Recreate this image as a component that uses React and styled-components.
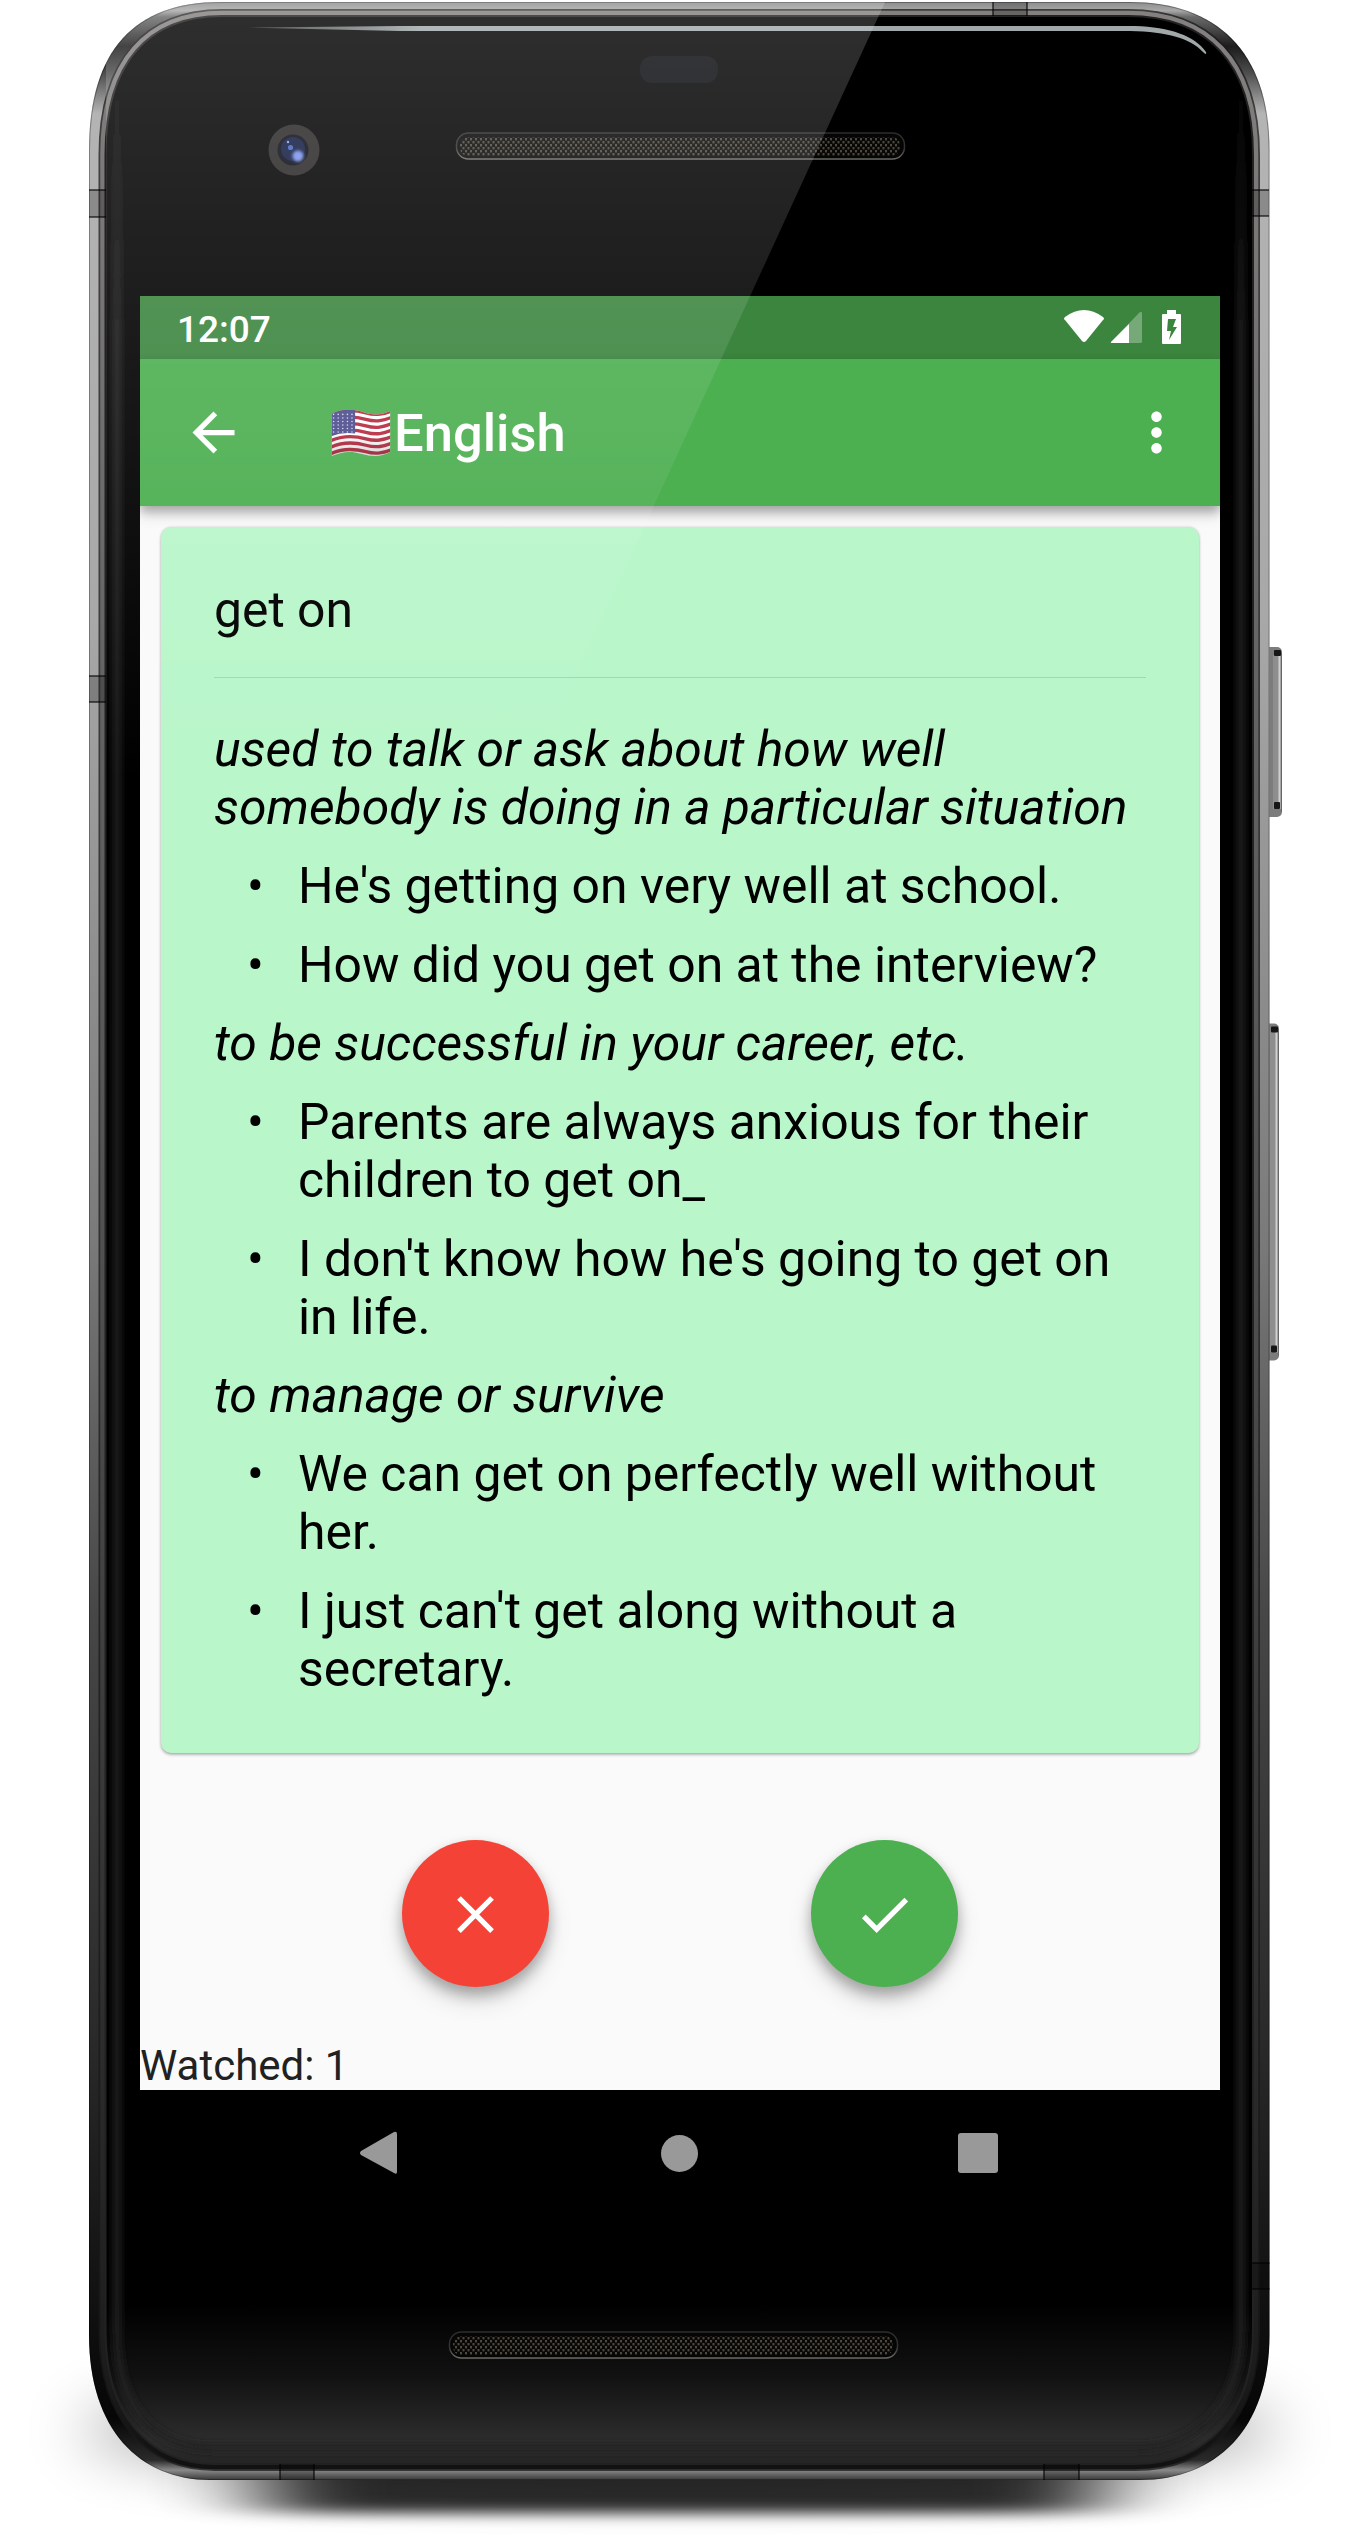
import React from "react";
import styled, { createGlobalStyle } from "styled-components";

const Global = createGlobalStyle`
  *,*::before{box-sizing:border-box}
  body{margin:0;background:#fff;font-family:Roboto,sans-serif}
`;
const Stage = styled.main`
  position:relative;width:1370px;height:2534px;overflow:hidden;background:#fff;
`;
const Art = styled.svg`position:absolute;left:0;top:0;display:block;pointer-events:none;`;
const Overlay = styled(Art)`z-index:2;`;
const Screen = styled.section`
  position:relative;margin:296px 0 0 140px;width:1080px;height:1794px;background:#fafafa;display:flex;flex-direction:column;overflow:hidden;
`;
const StatusBar = styled.div`
  height:63px;flex:none;background:#3b853e;color:#fff;display:flex;align-items:center;justify-content:space-between;
  padding:4px 37px 0 37px;font-size:37px;font-weight:500;
`;
const StatusIcons = styled.svg`display:block;margin-top:-5px;`;
const AppBar = styled.header`
  height:147px;flex:none;background:#4caf50;color:#fff;display:flex;align-items:center;padding:0 42px;position:relative;
  box-shadow:0 5px 10px rgba(0,0,0,.28),0 10px 13px rgba(0,0,0,.12);z-index:1;
`;
const BarIcon = styled.svg`flex:none;width:63px;height:63px;margin-right:${p => p.$pull || 0}px;`;
const Title = styled.h1`
  margin:0 0 0 85px;flex:1;display:flex;align-items:center;font-size:52.5px;font-weight:500;line-height:62px;
`;
const FlagIcon = styled.svg`flex:none;margin:2px 2px 0 0;`;
const Card = styled.article`
  margin:21px;flex:none;height:1226px;border-radius:10px;background:#b9f6ca;padding:55px 53px 0;color:#000;
  box-shadow:0 2px 3px rgba(0,0,0,.25),0 0 3px rgba(0,0,0,.16);font-size:49.875px;line-height:57.8px;
`;
const Word = styled.h2`margin:0;font:inherit;border-bottom:1px solid rgba(0,0,0,.12);height:96px;`;
const Sense = styled.p`margin:0 0 21px;font-style:italic;white-space:nowrap;`;
const Entry = styled.div`padding-top:43.2px;`;
const Example = styled.div`display:flex;margin-bottom:21px;white-space:nowrap;
  &::before{content:"•";width:84px;flex:none;padding-left:33px;}
`;
const Actions = styled.div`display:flex;justify-content:space-between;padding:66px 262px 0;`;
const Round = styled.button`
  width:147px;height:147px;border:0;border-radius:50%;background:${p => p.$color};padding:1px 0 0;display:grid;place-items:center;
  box-shadow:0 9px 14px rgba(0,0,0,.24),0 14px 26px rgba(0,0,0,.12),0 3px 12px rgba(0,0,0,.06);
`;
const Watched = styled.p`margin:auto 0 0;font-size:42px;line-height:49px;color:#212121;`;
const NavBar = styled.nav`
  position:relative;margin-left:140px;width:1080px;height:126px;display:flex;align-items:center;justify-content:space-between;padding:0 222px 0 220px;
`;
const HomeIcon = styled.svg`margin-left:2px;`;

const SENSES = [
  { text: ["used to talk or ask about how well", "somebody is doing in a particular situation"], examples: [["He's getting on very well at school."], ["How did you get on at the interview?"]] },
  { text: ["to be successful in your career, etc."], examples: [["Parents are always anxious for their", "children to get on_"], ["I don't know how he's going to get on", "in life."]] },
  { text: ["to manage or survive"], examples: [["We can get on perfectly well without", "her."], ["I just can't get along without a", "secretary."]] },
];
const Lines = ({ items }) => <span>{items.map((t, i) => <React.Fragment key={t}>{i > 0 && <br />}{t}</React.Fragment>)}</span>;

const BODY = "M220 2H1130C1215 2 1269.5 50 1269.5 150V2335C1269.5 2430 1215 2480 1140 2480H210C140 2480 89 2430 89 2335V150C89 50 135 2 220 2Z";
const GLASS = "M222 17H1128C1205 17 1252 62 1252 155V2332C1252 2415 1205 2463 1135 2463H215C150 2463 106.5 2415 106.5 2332V155C106.5 62 150 17 222 17Z";

// Antenna breaks in the metal frame: x, y, width, height
const BANDS = [
  [89, 190, 17, 27], [1252, 190, 17, 26], [89, 676, 17, 26], [993, 2, 34, 14],
  [1252, 2263, 17.5, 26], [280, 2464, 34, 16], [1044, 2464, 35, 16],
];

const Band = ({ x, y, w, h }) => {
  const lines = w > 25 ? `M${x} ${y}v${h}M${x + w} ${y}v${h}` : `M${x} ${y}h${w}M${x} ${y + h}h${w}`;
  return <g><rect x={x} y={y} width={w} height={h} fill="#000" opacity=".22" /><path d={lines} stroke="#000" strokeOpacity=".55" strokeWidth="2" /></g>;
};

const SideKey = ({ y, height, right }) => (
  <g>
    <rect x="1262" y={y} width={right - 1262} height={height} rx="5" fill="#7c7c7c" />
    <rect x={right - 9} y={y + 8} width="6" height={height - 16} fill="#8e8e8e" />
    <rect x={right - 3.5} y={y + 8} width="2" height={height - 16} fill="#d0d0d0" />
    <rect x={right - 8} y={y + 3} width="7" height="6" rx="1" fill="#161616" />
    <rect x={right - 8} y={y + height - 15} width="6" height="7" rx="1" fill="#161616" />
    <rect x={right - 1} y={y + 5} width="1" height={height - 10} fill="#666" />
  </g>
);

const Speaker = ({ x, y }) => (
  <g>
    <rect x={x + 0.5} y={y} width="448" height="26" rx="12" fill="#050505" stroke="url(#lip)" strokeWidth="1.5" />
    <rect x={x + 4} y={y + 4} width="440" height="19" rx="8" fill="url(#mesh)" />
  </g>
);

function Phone() {
  return (
    <Art width="1370" height="2534" viewBox="0 0 1370 2534">
      <defs>
        <linearGradient id="metal" x1="0" y1="0" x2="0" y2="1">
          <stop offset="0" stopColor="#8c8c8c" /><stop offset=".0035" stopColor="#a8a8a8" /><stop offset=".006" stopColor="#6a6a6a" />
          <stop offset=".018" stopColor="#1c1c1c" /><stop offset=".028" stopColor="#4a4a4a" /><stop offset=".045" stopColor="#b4b4b4" />
          <stop offset=".25" stopColor="#a8a8a8" /><stop offset=".5" stopColor="#7a7a7a" /><stop offset=".65" stopColor="#474747" />
          <stop offset=".82" stopColor="#2a2a2a" /><stop offset=".975" stopColor="#060606" /><stop offset=".992" stopColor="#2a2a2a" /><stop offset=".996" stopColor="#8a8a8a" /><stop offset="1" stopColor="#383838" />
        </linearGradient>
        <linearGradient id="rim" x1="0" y1="0" x2="0" y2="1">
          <stop offset="0" stopColor="#858080" /><stop offset=".25" stopColor="#666" /><stop offset=".55" stopColor="#4c4c4c" />
          <stop offset=".8" stopColor="#303030" /><stop offset=".96" stopColor="#1c1c1c" /><stop offset="1" stopColor="#121212" />
        </linearGradient>
        <linearGradient id="glass" x1="0" y1="0" x2="0" y2="1">
          <stop offset="0" stopColor="#000" /><stop offset=".935" stopColor="#000" /><stop offset=".965" stopColor="#121212" /><stop offset=".99" stopColor="#2c2c2c" /><stop offset="1" stopColor="#252525" />
        </linearGradient>
        <linearGradient id="glow" gradientUnits="userSpaceOnUse" x1="0" y1="60" x2="0" y2="330">
          <stop offset="0" stopColor="#202020" stopOpacity="0" /><stop offset="1" stopColor="#202020" />
        </linearGradient>
        <linearGradient id="lip" x1="0" y1="0" x2="0" y2="1">
          <stop offset="0" stopColor="#2c2c2c" /><stop offset=".6" stopColor="#333" /><stop offset="1" stopColor="#6a6a66" />
        </linearGradient>
        <linearGradient id="streak" gradientUnits="userSpaceOnUse" x1="248" y1="0" x2="420" y2="0">
          <stop offset="0" stopColor="#8d9495" stopOpacity=".4" /><stop offset="1" stopColor="#a0a8a9" />
        </linearGradient>
        <filter id="soft" x="-30%" y="-100%" width="160%" height="300%"><feGaussianBlur stdDeviation="52 7" /></filter>
        <filter id="wide" x="-30%" y="-80%" width="160%" height="260%"><feGaussianBlur stdDeviation="32 30" /></filter>
        <filter id="edge"><feGaussianBlur stdDeviation="3.5" /></filter>
        <filter id="spot" x="-100%" y="-100%" width="300%" height="300%"><feGaussianBlur stdDeviation="1.5" /></filter>
        <pattern id="mesh" width="5" height="6" patternUnits="userSpaceOnUse">
          <rect width="5" height="6" fill="#070706" /><rect width="2" height="2.4" fill="#4e483e" /><rect x="2.5" y="3" width="2" height="2.4" fill="#4e483e" />
        </pattern>
        <clipPath id="glassClip"><path d={GLASS} /></clipPath>
        <clipPath id="bodyClip"><path d={BODY} /></clipPath>
      </defs>
      <ellipse cx="680" cy="2430" rx="600" ry="50" fill="#000" opacity=".36" filter="url(#wide)" />
      <rect x="262" y="2430" width="836" height="83" rx="20" fill="#000" opacity=".82" filter="url(#soft)" />
      <SideKey y={647} height={170} right={1282} />
      <SideKey y={1023.5} height={337} right={1279} />
      <path d={BODY} fill="url(#metal)" />
      <g clipPath="url(#bodyClip)">
        <path d={BODY} fill="none" stroke="#000" strokeOpacity=".3" strokeWidth="2" />
        <path d={GLASS} fill="none" stroke="#1a1a1a" strokeOpacity=".75" strokeWidth="16" />
        <path d={GLASS} fill="none" stroke="url(#rim)" strokeWidth="12.5" />
        <path d={GLASS} fill="none" stroke="#222" strokeWidth="4" />
      </g>
      <path d={GLASS} fill="url(#glass)" />
      <g clipPath="url(#glassClip)">
        <path d="M117 60V2330C117 2405 150 2448 215 2448H1135C1200 2448 1241 2400 1241 2330V60" fill="none" stroke="url(#glow)" strokeWidth="7" filter="url(#edge)" />
      </g>
      <rect x="640" y="56" width="78" height="27" rx="12" fill="#090a0f" />
      <ellipse cx="294" cy="150" rx="25.5" ry="25.5" fill="#2a2727" />
      <circle cx="293" cy="150" r="15.5" fill="#0a0c18" />
      <circle cx="293" cy="149" r="12" fill="#121c42" />
      <circle cx="298" cy="156" r="5.5" fill="#7b93ee" filter="url(#spot)" />
      <circle cx="290.5" cy="147.5" r="2.6" fill="#4465bd" /><circle cx="288" cy="142" r="1.2" fill="#8ea5e5" />
      <path d="M248 27.5L400 26H1135C1170 27 1195 36 1206 52Q1207 56 1203 52C1190 38 1168 32 1130 31H400Z" fill="url(#streak)" />
      <Speaker x={456} y={133} /><Speaker x={449} y={2332} />
      {BANDS.map(([x, y, w, h]) => <Band key={`${x}-${y}`} x={x} y={y} w={w} h={h} />)}
    </Art>
  );
}

const Glare = () => (
  <Overlay width="1370" height="900" viewBox="0 0 1370 900">
    <defs>
      <linearGradient id="glare" gradientUnits="userSpaceOnUse" x1="0" y1="0" x2="0" y2="780"><stop offset="0" stopColor="#fff" stopOpacity=".185" /><stop offset=".4" stopColor="#fff" stopOpacity=".11" /><stop offset="1" stopColor="#fff" stopOpacity="0" /></linearGradient>
      <clipPath id="glareClip"><path d={BODY} /></clipPath>
    </defs>
    <path clipPath="url(#glareClip)" d="M106 0H886L528 780H106Z" fill="url(#glare)" />
  </Overlay>
);

const Flag = () => (
  <FlagIcon width="62" height="47" viewBox="0 0 62 48">
    <defs>
      <clipPath id="wave"><path d="M1 4C13-2 25-1 36 3C46 6 54 4 61 1V43C51 48 43 48 32 45C20 41 10 43 1 47Z" /></clipPath>
      <linearGradient id="fold" x1="0" y1="0" x2="0" y2="1"><stop offset=".5" stopOpacity="0" /><stop offset="1" stopOpacity=".18" /></linearGradient>
    </defs>
    <g clipPath="url(#wave)"><rect width="62" height="48" fill="#fff" />
      {[0, 1, 2, 3, 4, 5, 6].map(i => <path key={i} d={`M0 ${5 + i * 6.6}C13 ${-1 + i * 6.6} 25 ${i * 6.6} 36 ${3 + i * 6.6}S54 ${4 + i * 6.6} 62 ${1 + i * 6.6}`} fill="none" stroke="#b92b40" strokeWidth="3.4" />)}
      <path d="M0 0H25V24Q12 22 0 27Z" fill="#4f4f8f" />
      {[0, 1, 2, 3, 4, 5].map(r => [0, 1, 2, 3, 4].map(c => <circle key={r + "-" + c} cx={3 + c * 4.7} cy={4.5 + r * 3.6} r=".8" fill="#d5d5ef" />))}
      <rect width="62" height="48" fill="url(#fold)" />
    </g>
  </FlagIcon>
);

export default function App() {
  return (
    <><Global /><Stage><Phone />
      <Screen>
        <StatusBar><span>12:07</span>
          <StatusIcons width="120" height="38" viewBox="0 0 120 38">
            <path d="M2 9Q21-5 40 9Q42 11 40 12L23 33Q21 35 19 33L2 12Q0 11 2 9Z" fill="#fff" />
            <path d="M48 34L76 5Q79 2 79 6V34Q79 35 77 35H49Q47 35 48 34Z" fill="#fff" opacity=".3" /><path d="M48 34L66 16V35H49Q47 35 48 34Z" fill="#fff" />
            <path fillRule="evenodd" d="M104 2H113V6H117Q118 6 118 7V35Q118 36 117 36H100Q99 36 99 35V7Q99 6 100 6H104ZM105 11L104 23H108L106 32L114 19H110L113 11Z" fill="#fff" />
          </StatusIcons>
        </StatusBar>
        <AppBar>
          <BarIcon viewBox="0 0 24 24"><path d="M20 11H7.83l5.59-5.59L12 4l-8 8 8 8 1.41-1.41L7.83 13H20v-2z" fill="#fff" /></BarIcon>
          <Title><Flag />English</Title>
          <BarIcon viewBox="0 0 24 24" $pull={-10}><path d="M12 8c1.1 0 2-.9 2-2s-.9-2-2-2-2 .9-2 2 .9 2 2 2zm0 2c-1.1 0-2 .9-2 2s.9 2 2 2 2-.9 2-2-.9-2-2-2zm0 6c-1.1 0-2 .9-2 2s.9 2 2 2 2-.9 2-2-.9-2-2-2z" fill="#fff" /></BarIcon>
        </AppBar>
        <Card><Word>get on</Word>
          <Entry>{SENSES.map(s => <React.Fragment key={s.text[0]}><Sense><Lines items={s.text} /></Sense>{s.examples.map(e => <Example key={e[0]}><Lines items={e} /></Example>)}</React.Fragment>)}</Entry>
        </Card>
        <Actions>
          <Round $color="#f44336" aria-label="Wrong"><svg width="63" height="63" viewBox="0 0 24 24"><path d="M19 6.41L17.59 5 12 10.59 6.41 5 5 6.41 10.59 12 5 17.59 6.41 19 12 13.41 17.59 19 19 17.59 13.41 12z" fill="#fff" /></svg></Round>
          <Round $color="#4caf50" aria-label="Right"><svg width="63" height="63" viewBox="0 0 24 24"><path d="M9 16.17L4.83 12l-1.42 1.41L9 19 21 7l-1.41-1.41z" fill="#fff" /></svg></Round>
        </Actions>
        <Watched>Watched: 1</Watched>
      </Screen>
      <NavBar>
        <svg width="38" height="44"><path d="M1 20L34 1Q37 0 37 3V41Q37 44 34 42L1 24Q-1 22 1 20Z" fill="#999" /></svg>
        <HomeIcon width="37" height="37"><circle cx="18.5" cy="18.5" r="18.5" fill="#999" /></HomeIcon>
        <svg width="40" height="40"><rect width="40" height="40" rx="3" fill="#999" /></svg>
      </NavBar>
      <Glare />
    </Stage></>
  );
}
